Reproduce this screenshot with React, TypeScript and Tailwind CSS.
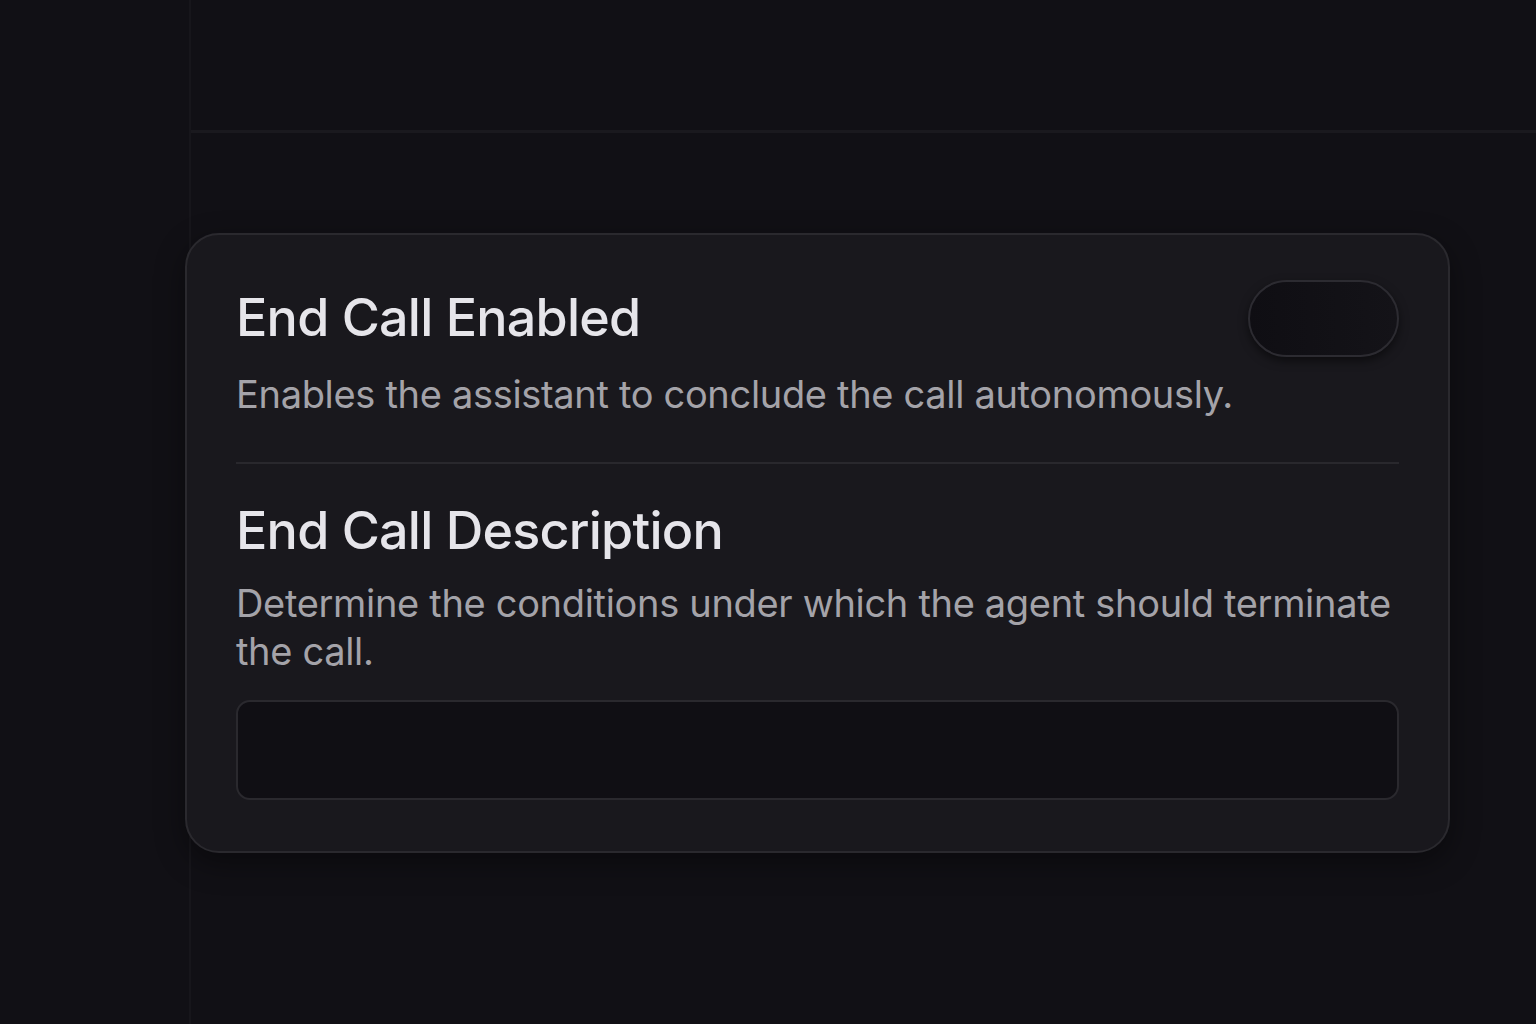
import React from "react";

export default function App() {
  return (
    <div
      className="flex w-[1536px] h-[1024px] overflow-hidden bg-[#111015]"
      style={{ fontFamily: "Inter, 'Noto Sans', sans-serif" }}
    >
      <aside className="w-[191px] shrink-0 border-r-2 border-[#17161b]" />
      <main className="flex flex-1 flex-col">
        <header className="h-[133px] shrink-0 border-b-[3px] border-[#1a191e]" />
        <section className="pt-[100px]">
          <div className="-ml-[6px] w-[1265px] h-[620px] rounded-[34px] border-2 border-[#2a292e] bg-[#19181d] px-[49px] pt-[53px] shadow-[0_10px_30px_rgba(0,0,0,0.4)]">
            <div className="flex items-start justify-between">
              <div>
                <h2 className="text-[52px] leading-[60px] font-medium text-[#e6e5ea] tracking-[-0.75px]">
                  End Call Enabled
                </h2>
                <p className="mt-[23px] text-[38px] leading-[46px] text-[#a4a3a9] tracking-[-0.32px]">
                  Enables the assistant to conclude the call autonomously.
                </p>
              </div>
              <div className="-mt-[8px] w-[151px] h-[77px] rounded-full border-2 border-[#2c2b31] bg-gradient-to-r from-[#0f0e13] to-[#141318] shadow-[0_4px_10px_rgba(0,0,0,0.5)]" />
            </div>

            <div className="mt-[45px] h-[2px] w-full bg-[#29282d]" />

            <h2 className="mt-[37px] text-[52px] leading-[60px] font-medium text-[#e6e5ea] tracking-[-0.75px]">
              End Call Description
            </h2>
            <p className="mt-[18px] text-[38px] leading-[48px] text-[#a4a3a9] tracking-[-0.32px]">
              Determine the conditions under which the agent should terminate the call.
            </p>

            <div className="mt-[25px] h-[100px] w-full rounded-[14px] border-2 border-[#2a292e] bg-[#100f14]" />
          </div>
        </section>
      </main>
    </div>
  );
}
